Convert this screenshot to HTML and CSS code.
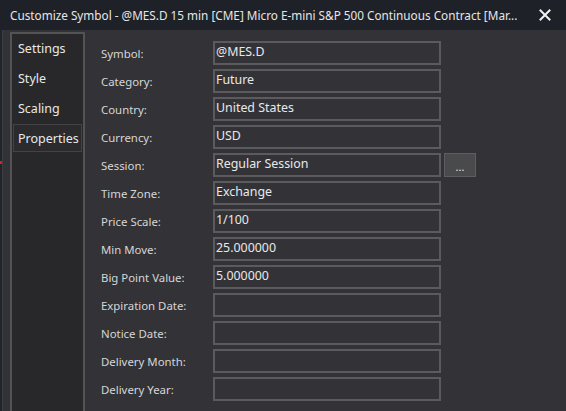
FILE: index.html
```html
<!DOCTYPE html>
<html>
<head>
<meta charset="utf-8">
<link rel="stylesheet" href="styles.css">
</head>
<body>
<div class="window">
  <div class="titlebar">
    <span class="title">Customize Symbol - @MES.D 15 min [CME] Micro E-mini S&amp;P 500 Continuous Contract [Mar...</span>
    <span class="close"><svg width="12" height="12" viewBox="0 0 12 12"><path d="M1.5 1.5 L10.5 10.5 M10.5 1.5 L1.5 10.5" stroke="#f2f2f2" stroke-width="2" stroke-linecap="square"/></svg></span>
  </div>
  <div class="content">
    <div class="edge"><span class="mark"></span></div>
    <nav class="sidebar">
      <div class="nav-item">Settings</div>
      <div class="nav-item">Style</div>
      <div class="nav-item">Scaling</div>
      <div class="nav-item active">Properties</div>
    </nav>
    <div class="form">
      <label class="lbl">Symbol:</label><div class="field">@MES.D</div><div></div>
      <label class="lbl">Category:</label><div class="field">Future</div><div></div>
      <label class="lbl">Country:</label><div class="field">United States</div><div></div>
      <label class="lbl">Currency:</label><div class="field">USD</div><div></div>
      <label class="lbl">Session:</label><div class="field">Regular Session</div><div class="btn">...</div>
      <label class="lbl">Time Zone:</label><div class="field">Exchange</div><div></div>
      <label class="lbl">Price Scale:</label><div class="field">1/100</div><div></div>
      <label class="lbl">Min Move:</label><div class="field">25.000000</div><div></div>
      <label class="lbl">Big Point Value:</label><div class="field">5.000000</div><div></div>
      <label class="lbl">Expiration Date:</label><div class="field"></div><div></div>
      <label class="lbl">Notice Date:</label><div class="field"></div><div></div>
      <label class="lbl">Delivery Month:</label><div class="field"></div><div></div>
      <label class="lbl">Delivery Year:</label><div class="field"></div><div></div>
    </div>
  </div>
</div>
</body>
</html>
```
FILE: styles.css
```css
html, body {
  margin: 0;
  padding: 0;
  height: 100%;
  overflow: hidden;
}
body {
  background: #333337;
  font-family: "Noto Sans", "Open Sans", sans-serif;
  color: #dcdcdc;
}
.window {
  display: flex;
  flex-direction: column;
  height: 411px;
}
.titlebar {
  height: 30px;
  flex: none;
  background: #1f2129;
  display: flex;
  align-items: center;
  padding-left: 10px;
  padding-right: 15px;
  box-sizing: border-box;
}
.title {
  flex: 1;
  min-width: 0;
  overflow: hidden;
  font-size: 11.75px;
  color: #e6e6e6;
  white-space: nowrap;
}
.close {
  display: flex;
  align-items: center;
}
.content {
  flex: 1;
  display: flex;
  position: relative;
}
.edge {
  width: 2px;
  background: #22242b;
  border-right: 1px solid #3d3e44;
  position: relative;
}
.mark {
  position: absolute;
  left: 0;
  top: 131px;
  width: 2px;
  height: 3px;
  background: #e0201c;
}
.sidebar {
  margin-left: 7px;
  margin-top: 2px;
  width: 71px;
  border: 2px solid #535356;
  border-bottom: none;
  background: #28282b;
  font-size: 12.5px;
  color: #e8e8e8;
}
.nav-item {
  height: 28px;
  margin: 0 1px 2px 1px;
  padding-left: 4px;
  display: flex;
  align-items: center;
  box-sizing: border-box;
  border: 1px solid transparent;
}
.nav-item.active {
  border-color: #434347;
  background: #2b2b2e;
}
.form {
  margin-left: 16px;
  margin-top: 11px;
  display: grid;
  grid-template-columns: 112px 228px 35px;
  row-gap: 4px;
  align-content: start;
  grid-auto-rows: 24px;
}
.lbl {
  font-size: 11.4px;
  color: #d6d6d6;
  display: flex;
  align-items: center;
  padding-top: 1px;
}
.field {
  border: 2px solid #5b5b5e;
  box-sizing: border-box;
  font-size: 12.4px;
  color: #e8e8e8;
  padding: 0 1px;
  line-height: 17px;
}
.btn {
  margin-left: 3px;
  background: #4a4a4d;
  border: 1px solid #5e5e61;
  box-sizing: border-box;
  font-size: 11px;
  color: #e0e0e0;
  display: flex;
  align-items: center;
  justify-content: center;
  padding-top: 2px;
}
```
